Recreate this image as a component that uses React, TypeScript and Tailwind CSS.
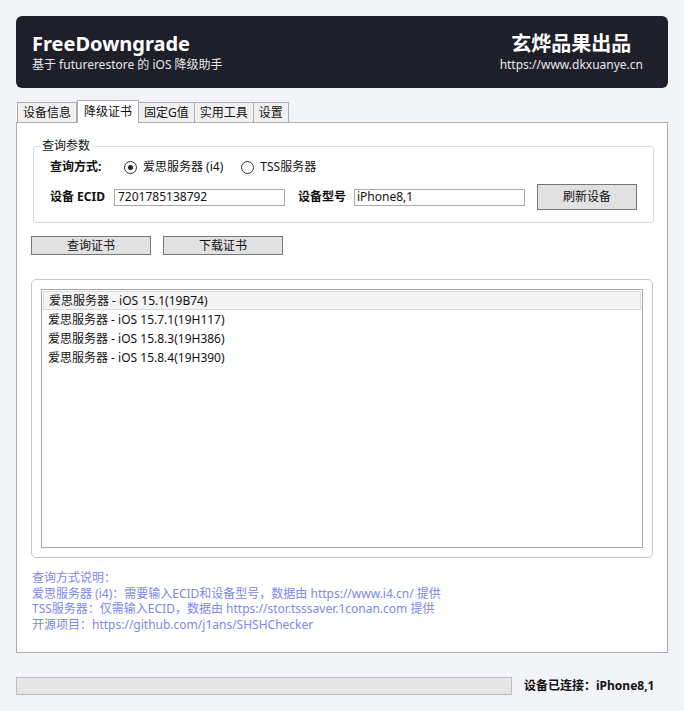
const font = { fontFamily: '"Noto Sans", "Noto Sans CJK SC", sans-serif' };

function Radio({ checked, label }: { checked?: boolean; label: string }) {
  return (
    <label className="flex items-center gap-[6px]">
      <span className="w-[13px] h-[13px] rounded-full border border-[#333] bg-white flex items-center justify-center">
        {checked && <span className="w-[5px] h-[5px] rounded-full bg-[#222]" />}
      </span>
      <span>{label}</span>
    </label>
  );
}

const tabs = ["设备信息", "降级证书", "固定G值", "实用工具", "设置"];
const items = [
  "爱思服务器 - iOS 15.1(19B74)",
  "爱思服务器 - iOS 15.7.1(19H117)",
  "爱思服务器 - iOS 15.8.3(19H386)",
  "爱思服务器 - iOS 15.8.4(19H390)",
];

export default function App() {
  return (
    <div
      className="w-[684px] h-[711px] bg-[#f3f4f8] px-4 pt-4 text-[12px] text-[#111] flex flex-col"
      style={font}
    >
      <header className="h-[72px] rounded-md bg-[#1f1f29] flex justify-between items-center pl-4 pr-[25px] text-white">
        <div className="flex flex-col">
          <h1 className="text-[20px] font-bold leading-[26px]">FreeDowngrade</h1>
          <p className="text-[12px] leading-[16px] text-[#e6e6ea]">基于 futurerestore 的 iOS 降级助手</p>
        </div>
        <div className="flex flex-col items-center">
          <h2 className="text-[20px] font-bold leading-[26px]">玄烨品果出品</h2>
          <p className="text-[12px] leading-[16px] text-[#e6e6ea]">https://www.dkxuanye.cn</p>
        </div>
      </header>

      <div className="mt-[12px] flex items-end pl-[1px] h-[22px]">
        {tabs.map((t, i) =>
          i === 1 ? (
            <div
              key={t}
              className="h-[23px] -mb-px px-[6px] border border-b-0 border-[#adadad] bg-white flex items-center relative z-10"
            >
              {t}
            </div>
          ) : (
            <div
              key={t}
              className="h-[20px] px-[5px] border border-[#adadad] border-b-0 bg-[#f0f0f0] flex items-center -ml-px first:ml-0"
            >
              {t}
            </div>
          )
        )}
      </div>

      <main className="h-[531px] border border-[#adadad] bg-white px-[15px] pt-[15px] flex flex-col">
        <fieldset className="ml-[1px] mr-[-1px] border border-[#d5dae3] rounded-[3px] px-[16px] pb-[12px] pt-0">
          <legend className="px-[2px] ml-[-10px] leading-[16px]">查询参数</legend>
          <div className="flex items-center h-[20px] mt-[3px]">
            <span className="font-bold w-[74px]">查询方式:</span>
            <div className="flex items-center gap-[18px]">
              <Radio checked label="爱思服务器 (i4)" />
              <Radio label="TSS服务器" />
            </div>
          </div>
          <div className="flex items-center mt-[7px]">
            <span className="font-bold w-[64px]">设备 ECID</span>
            <input
              readOnly
              value="7201785138792"
              className="w-[171px] h-[17px] border border-[#a9a9a9] px-[3px] outline-none text-[12px]"
            />
            <span className="font-bold ml-[13px] w-[56px]">设备型号</span>
            <input
              readOnly
              value="iPhone8,1"
              className="w-[171px] h-[17px] border border-[#a9a9a9] px-[2px] outline-none text-[12px]"
            />
            <button className="ml-[12px] w-[100px] h-[26px] border border-[#777] bg-[#e1e1e1]">刷新设备</button>
          </div>
        </fieldset>

        <div className="flex gap-[12px] mt-[13px] ml-[-1px]">
          <button className="w-[120px] h-[19px] border border-[#777] bg-[#e1e1e1] leading-[17px]">查询证书</button>
          <button className="w-[120px] h-[19px] border border-[#777] bg-[#e1e1e1] leading-[17px]">下载证书</button>
        </div>

        <section className="mt-[24px] ml-[-1px] mr-[-1px] h-[279px] border border-[#c3c7d8] rounded-[5px] p-[9px]">
          <div className="h-full border border-[#a6a6a6] p-[1px]">
            {items.map((it, i) => (
              <div
                key={it}
                className={
                  "h-[19px] px-[5px] flex items-center " +
                  (i === 0 ? "bg-[#f4f4f4] border border-[#dadada] px-[4px]" : "")
                }
              >
                {it}
              </div>
            ))}
          </div>
        </section>

        <div className="mt-[12px] text-[#7b88ec] leading-[15.5px]">
          <p>查询方式说明：</p>
          <p>爱思服务器 (i4)：需要输入ECID和设备型号，数据由 https://www.i4.cn/ 提供</p>
          <p>TSS服务器：仅需输入ECID，数据由 https://stor.tsssaver.1conan.com 提供</p>
          <p>开源项目：https://github.com/j1ans/SHSHChecker</p>
        </div>
      </main>

      <footer className="mt-[24px] flex items-center">
        <div className="w-[496px] h-[18px] border border-[#bcbcbc] bg-[#e6e6e6]" />
        <span className="ml-[12px] font-bold">设备已连接：iPhone8,1</span>
      </footer>
    </div>
  );
}
